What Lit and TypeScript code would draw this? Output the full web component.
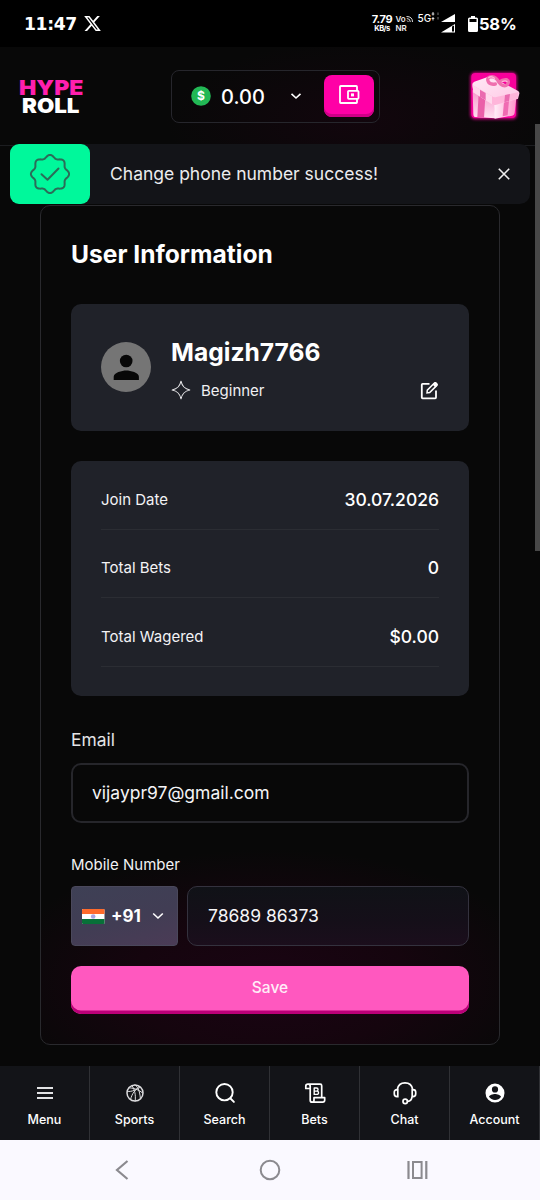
import { LitElement, html, css, svg } from "lit";
import { customElement } from "lit/decorators.js";

const scallop = (cx: number, cy: number, r: number, amp: number): string => {
  const pts: string[] = [];
  for (let i = 0; i < 160; i++) {
    const a = (i / 160) * Math.PI * 2;
    const c = Math.cos(8 * a);
    const k = r + amp * c;
    pts.push(`${(cx + k * Math.sin(a)).toFixed(2)} ${(cy - k * Math.cos(a)).toFixed(2)}`);
  }
  return `M${pts.join("L")}Z`;
};

const navIcons = {
  menu: svg`<path d="M4 7h16M4 12h16M4 17h16" stroke="#e2e2e4" stroke-width="1.900"/>`,
  sports: svg`<g stroke="#dcdcde" stroke-width="1" stroke-linecap="round"><circle cx="12" cy="12" r="8" stroke-width="1.500"/><path d="M9 4.600C12 9 12.800 14 12.200 20M17.600 6.200C12.500 8 9 12 7.600 18.500M4.300 10.500C9 10.800 14 9 16 5.200M12 4c2 1.200 4.800 4.500 5.400 13.700M5.800 6.800c4 .2 9 1.200 13.800 5.200"/></g>`,
  search: svg`<g stroke="#fff" stroke-width="1.900" stroke-linecap="round"><circle cx="11.500" cy="11.200" r="8.200"/><path d="M17.500 17.500l3.400 3.400"/></g>`,
  bets: svg`<g stroke="#fff" stroke-width="1.700" stroke-linejoin="round" stroke-linecap="round"><path d="M5 3.200h12.200c1 0 1.500.6 1.500 1.500v11.500M5 3.200c-1.300 0-2.200.9-2.200 2v2.300h4.400M5 3.200c1.300 0 2.200.9 2.200 2v14c0 1.200.8 2 2 2h10.500c1.200 0 2-1 2-2.200v-2.300H11v2.500c0 1.200-.7 2-1.800 2"/><path d="M11.200 7h2.300a1.500 1.500 0 0 1 0 3.100h-2.300zM11.200 10.100h2.700a1.600 1.600 0 0 1 0 3.300h-2.700z" stroke-width="1.400"/></g>`,
  chat: svg`<g stroke="#fff" stroke-width="1.700" stroke-linecap="round"><path d="M4.300 8.500C5 4.500 8 1.900 12 1.900s7 2.600 7.700 6.600M4.300 8.600H4c-1.700 0-2.700 1-2.700 2.500v2c0 1.600 1 2.600 2.700 2.600h.8V8.600zM19.700 8.600h.3c1.700 0 2.700 1 2.700 2.500v2c0 1.600-1 2.600-2.700 2.600h-.8V8.600zM19 15.700c-.2 2.800-1.800 4.500-4.400 4.700"/><circle cx="12.200" cy="20.400" r="2.200"/></g>`,
  account: svg`<path fill="#fff" fill-rule="evenodd" d="M12 2.600a9.500 9.500 0 1 0 0 19 9.500 9.500 0 0 0 0-19zM12 5.300a3.100 3.100 0 1 1 0 6.200 3.100 3.100 0 0 1 0-6.200zM12 19c-2.500 0-4.700-1.300-6-3.200.1-1.900 4-2.900 6-2.900s5.900 1 6 2.900A7.200 7.200 0 0 1 12 19z"/>`,
};

@customElement("app-root")
export class AppRoot extends LitElement {
  static styles = css`
    :host { display: block; font-family: Inter, "Liberation Sans", sans-serif; color: #fff; }
    * { box-sizing: border-box; }
    svg { display: block; fill: none; flex: none; }
    .screen { position: relative; width: 540px; height: 1200px; overflow: hidden; background: #080808; display: flex; flex-direction: column; }
    .status { height: 47px; flex: none; background: #000; display: flex; align-items: center; padding: 0 23px 0 24px; }
    .time { font: 700 17.200px/24px "DejaVu Sans", sans-serif; width: 54px; letter-spacing: -.35px; }
    .xlogo { margin-left: 6px; }
    .spacer { flex: 1; }
    .rate { font: 700 11px/10px Inter, sans-serif; letter-spacing: -.3px; width: 21px; white-space: nowrap; display: flex; flex-direction: column; align-items: center; }
    .rate small { font-size: 7.500px; line-height: 9px; letter-spacing: -.5px; }
    .vo { font: 600 8px/9px Inter, sans-serif; width: 17px; margin-left: 3px; color: #eee; }
    .vo div { display: flex; }
    .gen { font: 500 10px/12px Inter, sans-serif; width: 23px; margin-left: 5px; margin-top: -12px; white-space: nowrap; display: flex; }
    .signal { margin: 0 13px 0 0; }
    .pct { font: 700 16.500px/24px Inter, sans-serif; letter-spacing: -.2px; width: 38px; margin-left: 1.500px; white-space: nowrap; }

    .header { height: 99px; flex: none; border-bottom: 1px solid #1c1d20; display: flex; align-items: center; padding: 0 18px 0 19px;
      background: radial-gradient(ellipse 190px 80px at 66% 75%, #12060d, transparent); }
    .logo { width: 65px; height: 38px; overflow: visible; }
    .logo text { font: 900 20.500px Inter, sans-serif; }
    .balance { width: 209px; height: 53px; margin-left: 86.500px; border: 1px solid #26262c; border-radius: 8px; display: flex; align-items: center; padding: 0 5px 0 19.500px; }
    .amount { font-size: 20px; line-height: 24px; font-weight: 500; margin: 1px 0 0 10px; width: 68.500px; letter-spacing: .1px; }
    .wallet { margin-left: auto; width: 50px; height: 42px; border-radius: 8px; background: #ff00a6; box-shadow: inset 0 -3px #cf0087; display: flex; justify-content: center; padding-top: 9px; }
    .gift { margin-left: auto; }

    .toast { position: absolute; left: 10px; top: 144px; width: 520px; height: 60px; border-radius: 10px; background: #131418; display: flex; align-items: center; }
    .ok { width: 80px; height: 60px; border-radius: 9px; background: #00f89b; display: grid; place-items: center; }
    .msg { flex: 1; padding-left: 20px; font-size: 17.500px; line-height: 24px; color: #ececee; }
    .close { margin-right: 19px; }

    .main { flex: none; height: 920px; padding: 59px 40px 21px; }
    .card { height: 840px; border: 1px solid #29292d; border-radius: 10px; padding: 0 30px;
      background: radial-gradient(ellipse 280px 135px at 50% 778px, #1a0413 0, #15050e 50%, transparent 100%); }
    h1 { margin: 0; padding-top: 31px; font-size: 24.600px; line-height: 34px; font-weight: 700; height: 98px; }
    .panel { background: #202229; border-radius: 10px; }
    .profile { height: 127px; padding: 0 30px; display: flex; align-items: center; }
    .profile > svg { margin-top: -1px; }
    .who { margin-left: 20px; flex: 1; padding-top: 4px; }
    .name { font-size: 24.600px; line-height: 32px; font-weight: 700; }
    .rank { display: flex; align-items: center; height: 26px; margin-top: 9px; font-size: 15px; color: #f0f0f2; }
    .rank span { margin-left: 10px; flex: 1; }
    .stats { margin-top: 30px; height: 235px; padding: 9px 30px 0; display: flex; flex-direction: column; }
    .row { flex: none; display: flex; align-items: center; justify-content: space-between; height: 59.500px; font-size: 15px; border-bottom: 1px solid #2b2d33; color: #f3f3f5; }
    .row + .row { margin-top: 9px; }
    .row b { font-size: 17.500px; font-weight: 500; color: #fff; }
    .label { font-size: 17.400px; line-height: 24px; margin-top: 32px; color: #e4e4e6; }
    .input { height: 60px; border: 2px solid #26262b; border-radius: 10px; display: flex; align-items: center; font-size: 17.500px; padding: 0 0 1px 19px; margin-top: 11px; color: #f5f5f7; }
    .label.mobile { font-size: 15px; margin-top: 29.500px; color: #f2f2f4; }
    .phone { display: flex; gap: 9.500px; margin-top: 9.500px; }
    .country { width: 106.500px; height: 60px; border-radius: 4px; border: 1px solid #4a485b; background: linear-gradient(165deg, #3e4055, #413d54 55%, #4b3b56); display: flex; align-items: center; padding: 0 0 0 10px; }
    .country b { font-size: 17px; font-weight: 700; margin: 0 9px 0 6px; width: 32px; }
    .number { flex: 1; height: 60px; margin: 0; padding-left: 20px; border: 1px solid #34323e; background: linear-gradient(#101217, #150f19 60%, #1b0e1c); }
    .save { height: 47.500px; margin-top: 20px; border-radius: 10px; background: #ff58bf; box-shadow: inset 0 -3.500px #bb0078; text-align: center; font-size: 15.500px; font-weight: 500; line-height: 43px; color: #ffeef8; }

    .nav { height: 74px; flex: none; background: #131418; display: grid; grid-template-columns: repeat(6, 1fr); }
    .item { border-right: 1px solid #303135; display: flex; flex-direction: column; align-items: center; padding-top: 15px; font-size: 12.500px; line-height: 16px; font-weight: 500; gap: 7px; }
    .system { height: 60px; flex: none; background: #faf9ff; display: flex; align-items: center; justify-content: space-between; padding: 0 111px 0 111px; }
    .scroll { position: absolute; right: 0; top: 124px; width: 5px; height: 427px; background: #484848; }
  `;

  private row(label: string, value: string) {
    return html`<div class="row"><span>${label}</span><b>${value}</b></div>`;
  }

  private item(label: string, icon: unknown) {
    return html`<div class="item"><svg width="24" height="24" viewBox="0 0 24 24">${icon}</svg><span>${label}</span></div>`;
  }

  render() {
    return html`
      <div class="screen">
        <div class="status">
          <span class="time">11:47</span>
          <svg class="xlogo" width="17" height="17" viewBox="1 2 22 20"><path fill="#fff" d="M18.244 2.250h3.308l-7.227 8.260 8.502 11.240H16.170l-5.214-6.817L4.990 21.750H1.680l7.730-8.835L1.254 2.250H8.080l4.713 6.231zm-1.161 17.520h1.833L7.084 4.126H5.117z"/></svg>
          <span class="spacer"></span>
          <div class="rate"><span>7.79</span><small>KB/s</small></div>
          <div class="vo"><div>Vo<svg width="8" height="8" viewBox="0 0 8 8"><path d="M.5 1.500q6 0 6 5.500M.8 3.500q3.500 0 3.500 3.500M1 5.500l1.500 1.500" stroke="#ddd"/></svg></div><div>NR</div></div>
          <div class="gen">5G<svg width="9" height="9" viewBox="0 0 9 9"><path d="M2 0v3.500M.7 2h2.600M2 5v3.500M.7 6.500h2.600" stroke="#ddd"/><path d="M7 .5v2.500M7 5v2.500" stroke="#777"/></svg></div>
          <svg class="signal" width="14" height="19" viewBox="0 0 14 19"><path d="M14 0v8H0zM14 10v8.500H0zM11 12.500v5h2v-6z" fill="#fff" fill-rule="evenodd"/></svg>
          <svg width="10" height="16" viewBox="0 0 10 16"><path d="M3 0h4v1.500h1.500Q10 1.500 10 3v11.500Q10 16 8.500 16h-7Q0 16 0 14.500V3Q0 1.500 1.500 1.500H3zM1.500 3v3h7V3z" fill="#fff" fill-rule="evenodd"/></svg>
          <span class="pct">58%</span>
        </div>

        <div class="header">
          <svg class="logo" viewBox="0 0 65 38"><text x="0" y="17.500" textLength="64.500" lengthAdjust="spacingAndGlyphs" fill="#ff1fae">HYPE</text><text x="3" y="36" textLength="57.500" lengthAdjust="spacingAndGlyphs" fill="#fff">ROLL</text></svg>
          <div class="balance">
            <svg width="20" height="20" viewBox="0 0 20 20"><circle cx="10" cy="10" r="9.800" fill="#22b855"/><text x="10" y="14.300" text-anchor="middle" font-size="12" font-weight="700" fill="#fff">$</text></svg>
            <span class="amount">0.00</span>
            <svg width="12" height="8" viewBox="0 0 12 8"><path d="M1.500 1.800L6 6l4.500-4.200" stroke="#fff" stroke-width="1.600"/></svg>
            <div class="wallet"><svg width="22" height="22" viewBox="0 0 22 22"><g stroke="#fff" stroke-width="1.800" stroke-linejoin="round"><path d="M19 7V2.800Q19 2 18.200 2H2.800Q2 2 2 2.800v15.400Q2 19 2.800 19h15.400q.8 0 .8-.8V15"/><rect x="10" y="6.800" width="10.500" height="8" rx=".8"/></g><rect x="13" y="9.400" width="3" height="3" fill="#fff"/></svg></div>
          </div>
          <svg class="gift" width="54" height="52" viewBox="595 214 160 156">
            <defs>
              <linearGradient id="lid" x1="0" y1="0" x2="1" y2="1"><stop stop-color="#ffeaf6"/><stop offset="1" stop-color="#ffc4e3"/></linearGradient>
              <linearGradient id="left" x1="0" y1="0" x2="0" y2="1"><stop stop-color="#f797cb"/><stop offset="1" stop-color="#ffe0f0"/></linearGradient>
              <linearGradient id="right" x1="0" y1="0" x2="1" y2="0"><stop stop-color="#fff0f8"/><stop offset="1" stop-color="#ff91c9"/></linearGradient>
              <filter id="glow" x="-10%" y="-10%" width="120%" height="120%"><feGaussianBlur stdDeviation="4"/></filter>
            </defs>
            <rect x="601" y="221" width="140" height="141" rx="14" fill="#ff00a0" opacity=".8" filter="url(#glow)"/>
            <rect x="604" y="223" width="134" height="135" rx="12" fill="#f8009b"/>
            <path d="M608 274l65 34 3 51-62-4q-4-2-4-8z" fill="url(#left)"/>
            <path d="M672 308l68-20-6 55q-1 6-7 8l-53 9z" fill="url(#right)"/>
            <path d="M626 284l20 11-4 62-20-2z" fill="#ea5fa9"/>
            <path d="M703 300l15-5-5 55-15 3z" fill="#f06bb2"/>
            <path d="M607 257q0-5 6-8l40-14q5-2 12 0l78 41q6 3 5 9l-4 15-66 18q-6 2-12-1l-56-36z" fill="url(#lid)"/>
            <path d="M608 260l58 33q6 4 13 2l67-15-3 20-65 18q-6 2-12-1l-56-36z" fill="#ffb5da"/>
            <path d="M608 260l58 33v24l-56-36z" fill="#ffd8ec"/>
            <path d="M630 273l17 10v22l-17-11zM705 289l15-3-3 21-14 4z" fill="#ea6bb0"/>
            <path d="M676 256q-18 3-22-9t12-13q12 1 21 17 12-10 23-8 9 5 2 15-8 8-21-2" stroke="#ef6fae" stroke-width="10" stroke-linecap="round" stroke-linejoin="round"/>
            <path d="M656 237q8-6 17 2M697 249q9-5 14 0" stroke="#ffb3d8" stroke-width="4" stroke-linecap="round"/>
          </svg>
        </div>

        <div class="main">
          <div class="card">
            <h1>User Information</h1>
            <div class="panel profile">
              <svg width="50" height="50" viewBox="0 0 50 50"><circle cx="25" cy="25" r="25" fill="#757575"/><circle cx="25.200" cy="19" r="6.300" fill="#080808"/><path d="M12.700 38v-3.200c0-4.200 8.300-6.300 12.600-6.300s12.600 2.100 12.600 6.300V38z" fill="#080808"/></svg>
              <div class="who">
                <div class="name">Magizh7766</div>
                <div class="rank">
                  <svg width="20" height="20" viewBox="0 0 20 20"><path d="M10 1.200C11.200 6.600 13.400 8.800 18.800 10 13.400 11.200 11.200 13.400 10 18.800 8.800 13.400 6.600 11.200 1.200 10 6.600 8.800 8.800 6.600 10 1.200z" stroke="#e8e8ea" stroke-width="1.100" stroke-linejoin="round"/></svg>
                  <span>Beginner</span>
                  <svg width="19" height="19" viewBox="0 0 19 19"><path d="M9.500 2.800H2.600q-.8 0-.8.8v13q0 .8.8.8h12.600q.8 0 .8-.8V9.500" stroke="#fff" stroke-width="1.800"/><path d="M7 11.900l.3-2.800 6.900-6.900q.8-.8 1.600 0l.8.8q.8.8 0 1.600l-6.900 6.900z" stroke="#fff" stroke-width="1.500"/><path d="M12.500 3.500l2-2q1-.9 2 0l.9.900q.9 1 0 2l-2 2z" fill="#fff"/></svg>
                </div>
              </div>
            </div>
            <div class="panel stats">
              ${this.row("Join Date", "30.07.2026")}
              ${this.row("Total Bets", "0")}
              ${this.row("Total Wagered", "$0.00")}
            </div>
            <div class="label">Email</div>
            <div class="input">vijaypr97@gmail.com</div>
            <div class="label mobile">Mobile Number</div>
            <div class="phone">
              <div class="country">
                <svg width="23" height="15" viewBox="0 0 23 15"><rect width="22.500" height="15" rx="1" fill="#fff"/><path d="M0 1q0-1 1-1h20.500q1 0 1 1v4H0z" fill="#ff6b2c"/><path d="M0 10h22.500v4q0 1-1 1H1q-1 0-1-1z" fill="#087038"/><circle cx="11.200" cy="7.500" r="2.300" fill="#a9a6e2"/></svg>
                <b>+91</b>
                <svg width="12" height="8" viewBox="0 0 12 8"><path d="M1.200 1.500L6 6l4.800-4.500" stroke="#fff" stroke-width="1.600"/></svg>
              </div>
              <div class="input number">78689 86373</div>
            </div>
            <div class="save">Save</div>
          </div>
        </div>

        <div class="nav">
          ${this.item("Menu", navIcons.menu)}
          ${this.item("Sports", navIcons.sports)}
          ${this.item("Search", navIcons.search)}
          ${this.item("Bets", navIcons.bets)}
          ${this.item("Chat", navIcons.chat)}
          ${this.item("Account", navIcons.account)}
        </div>
        <div class="system">
          <svg width="22" height="22" viewBox="0 0 22 22"><path d="M16.500 2L6 11l10.500 9" stroke="#8b8a8f" stroke-width="2.200"/></svg>
          <svg width="22" height="22" viewBox="0 0 22 22"><circle cx="11" cy="11" r="9.300" stroke="#8b8a8f" stroke-width="2"/></svg>
          <svg width="22" height="22" viewBox="0 0 22 22"><path d="M1.500 2v18M19.300 2v18" stroke="#8b8a8f" stroke-width="2.200"/><rect x="6" y="3" width="8.600" height="16" stroke="#8b8a8f" stroke-width="2"/></svg>
        </div>

        <div class="scroll"></div>
        <div class="toast">
          <div class="ok"><svg width="42" height="42" viewBox="0 0 42 42"><path d="${scallop(21, 21, 17.600, 1.500)}" stroke="#2b6d58" stroke-width="2" stroke-linejoin="round"/><path d="M12.500 21.300l6 5.500L29.500 15.500" stroke="#2b6d58" stroke-width="2" stroke-linecap="round" stroke-linejoin="round"/></svg></div>
          <span class="msg">Change phone number success!</span>
          <svg class="close" width="14" height="14" viewBox="0 0 14 14"><path d="M1.800 1.800l10.400 10.400M12.200 1.800L1.800 12.200" stroke="#eee" stroke-width="1.600"/></svg>
        </div>
      </div>
    `;
  }
}
